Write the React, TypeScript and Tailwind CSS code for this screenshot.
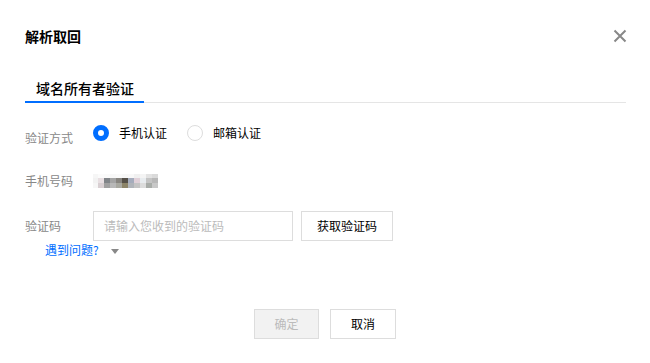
import React from "react";

// blurred phone number: 3 rows of pixel blocks
const blurRows: { h: string; cells: string[] }[] = [
  {
    h: "h-[4px]",
    cells: [
      "bg-[#f6f6f6]", "bg-[#fbfbfb]", "bg-[#fafafa]", "bg-[#f8f8f8]", "bg-[#fafafa]", "bg-[#f7f7f7]",
      "bg-[#f8f8f8]", "bg-[#f0f0f0]", "bg-[#f4f4f4]", "bg-[#e2e2e2]", "bg-[#dadada]",
    ],
  },
  {
    h: "h-[5px]",
    cells: [
      "bg-[#f2f2f2]", "bg-[#e8dfe2]", "bg-[#808488]", "bg-[#a4a4a4]", "bg-[#888580]", "bg-[#555048]",
      "bg-[#a5acbc]", "bg-[#e0d0d8]", "bg-[#e8ecef]", "bg-[#c4c4c4]", "bg-[#b8b8b8]",
    ],
  },
  {
    h: "h-[5px]",
    cells: [
      "bg-[#f6f6f6]", "bg-[#d8cfd2]", "bg-[#a0a0a0]", "bg-[#b8b8b8]", "bg-[#a8a8a0]", "bg-[#8c8468]",
      "bg-[#b0b4ba]", "bg-[#c4c4c4]", "bg-[#dcdcdc]", "bg-[#a8aca8]", "bg-[#c8c8c8]",
    ],
  },
];

function BlurredPhone() {
  return (
    <div className="flex flex-col">
      {blurRows.map((row, i) => (
        <div key={i} className={`flex ${row.h}`}>
          {row.cells.map((c, j) => (
            <div key={j} className={`${j === 0 ? "w-[5px]" : "w-[6px]"} h-full ${c}`} />
          ))}
        </div>
      ))}
    </div>
  );
}

export default function App() {
  return (
    <div className="w-[650px] h-[363px] bg-white flex flex-col font-['Noto_Sans_CJK_SC','Noto_Sans',sans-serif] text-[12px] text-black">
      {/* Header */}
      <div className="mt-[26px] pl-[25px] pr-[23px] flex items-center justify-between h-[20px]">
        <span className="text-[14px] leading-[20px] font-bold">解析取回</span>
        <svg width="14" height="14" viewBox="0 0 14 14">
          <path d="M1.5 1.5 L12.5 12.5 M12.5 1.5 L1.5 12.5" stroke="#888" strokeWidth="2" />
        </svg>
      </div>

      {/* Tabs */}
      <div className="mt-[32px] ml-[25px] mr-[24px] flex border-b border-[#e5e5e5]">
        <div className="pl-[11px] pr-[10px] pb-[3px] -mb-px border-b-2 border-[#006eff] text-[14px] leading-[20px] font-medium">
          域名所有者验证
        </div>
      </div>

      {/* Form */}
      <div className="mt-[20px] px-[25px] flex flex-col">
        <div className="flex items-start">
          <div className="w-[68px] mt-[5px] leading-[20px] text-[#888]">验证方式</div>
          <div className="flex items-center h-[20px]">
            <span className="w-[16px] h-[16px] rounded-full border-[5px] border-[#006eff] bg-white" />
            <span className="ml-[10px] leading-[20px]">手机认证</span>
            <span className="ml-[20px] w-[16px] h-[16px] rounded-full border border-[#dddddd] bg-white" />
            <span className="ml-[10px] leading-[20px]">邮箱认证</span>
          </div>
        </div>

        <div className="mt-[23px] flex items-center h-[20px]">
          <div className="w-[68px] leading-[20px] text-[#888]">手机号码</div>
          <BlurredPhone />
        </div>

        <div className="mt-[20px] flex items-center h-[30px]">
          <div className="w-[68px] leading-[20px] text-[#888]">验证码</div>
          <div className="w-[200px] h-[30px] border border-[#dddddd] flex items-center pl-[10px] text-[#bbbbbb]">
            请输入您收到的验证码
          </div>
          <button className="ml-[8px] w-[92px] h-[30px] border border-[#dddddd] bg-white flex items-center justify-center">
            获取验证码
          </button>
        </div>

        <div className="pl-[20px] flex items-center h-[18px]">
          <span className="text-[#006eff] leading-[18px]">遇到问题?</span>
          <svg width="8" height="5" viewBox="0 0 8 5" className="ml-[12px] mt-[2px]">
            <path d="M0 0 L8 0 L4 5 Z" fill="#888" />
          </svg>
        </div>
      </div>

      {/* Footer buttons */}
      <div className="mt-[50px] flex justify-center gap-[11px]">
        <button className="w-[65px] h-[30px] border border-[#dddddd] bg-[#f2f2f2] text-[#bbbbbb] flex items-center justify-center">
          确定
        </button>
        <button className="w-[66px] h-[30px] border border-[#dddddd] bg-white text-black flex items-center justify-center">
          取消
        </button>
      </div>
    </div>
  );
}
